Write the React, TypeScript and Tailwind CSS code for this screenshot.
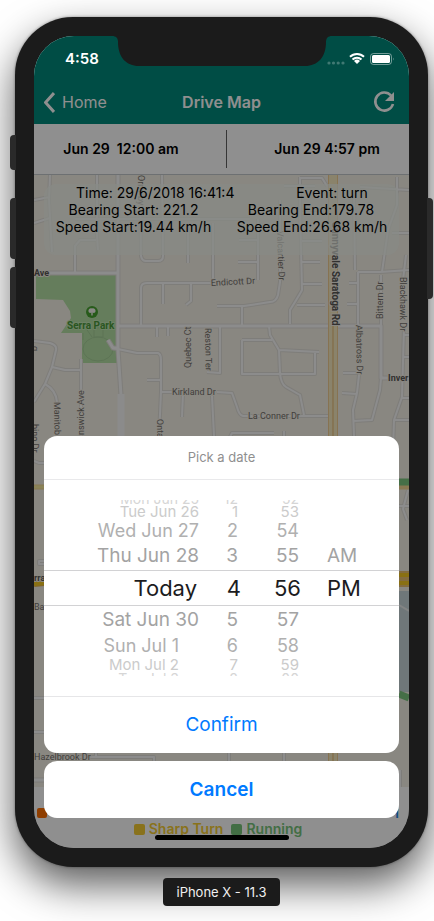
import React from "react";

type Label = { t: string; x: number; y: number; r?: number; bold?: boolean; size?: number };

const roads = [
  "M50 175L49 200L52 252M34 223L50 218M34 200L50 197",
  "M97 175V236L98 250M75 272V246L80 240H96",
  "M140 175L141 256Q142 261 146 261H158Q163 261 163 256L162 175",
  "M188 228V263M75 219H250M213 223V283",
  "M141 325V288Q141 283 147 283H212M163 283V304M191 283V301L186 305",
  "M34 341L50 343Q57 345 56 350L52 367L45 384L34 402M52 367L65 370H82M81 359V436M45 384Q56 390 57 402",
  "M113 348L137 353H158Q161 354 161 360V392L159 436M147 380H160M161 392H172",
  "M183 392L182 417M212 396L214 436M157 326V337M168 326V336M207 372L220 373V326",
  "M300 177V205L302 290Q300 294 290 310V324M300 178H322L327 186M284 186H315",
  "M302 213H317M302 241H322M302 262H320M302 284H322M239 240H257M238 262H257M258 219V280",
  "M280 200V282L278 295Q276 302 270 302L244 306H217M242 306V326M297 305H325",
  "M354 190L355 270M358 272H380L409 270M358 272V326M349 283H357M347 304H357",
  "M397 177V205L388 230L382 272M360 187L409 190M392 233H409M406 255L403 280M381 275V326",
  "M242 340H272M242 340V374H315V352M279 350L319 352M269 326L270 335L279 350L280 373Q281 384 286 387L300 395L304 415",
  "M217 392L232 393L237 407Q239 415 243 416H329M230 437L232 433H274M284 431V436",
  "M343 373H358M342 393L357 394M359 375L357 393L353 410L354 436M353 421L372 420L380 390L381 378",
  "M404 327L402 397L394 420L393 450M404 335H409M404 357H409M402 398H409M395 420H409",
  "M34 461L39 463H44M44 561H39V564H44M34 698H44M34 732H44M399 506H409M408 490L403 509L407 520",
  "M80 757H154V787M96 750V757M229 750V762M284 750V762M400 770V787",
];

const mainRoads = ["M34 273H117", "M117 326H381V378H409", "M118 175V350L121 395V436", "M108 340L113 348H118", "M34 780H44"];

const labels: Label[] = [
  { t: "Orm", x: 138, y: 175, r: 90 },
  { t: "by", x: 138, y: 196, r: 90 },
  { t: "Ave", x: 34, y: 276, bold: true },
  { t: "Endicott Dr", x: 211, y: 286, r: -3 },
  { t: "Valcartier Dr", x: 277, y: 231, r: 88 },
  { t: "Sunnyvale Saratoga Rd", x: 332, y: 222, r: 90, bold: true, size: 10 },
  { t: "Bittern Dr", x: 383, y: 319, r: -90 },
  { t: "Blackhawk Dr", x: 400, y: 277, r: 90 },
  { t: "Albatross Dr", x: 356, y: 325, r: 89 },
  { t: "Quebec Ct", x: 191, y: 368, r: -90 },
  { t: "Reston Ter", x: 205, y: 328, r: 89 },
  { t: "Kirkland Dr", x: 172, y: 395 },
  { t: "La Conner Dr", x: 248, y: 419 },
  { t: "Inver", x: 388, y: 381, bold: true },
  { t: "Manitob", x: 54, y: 402, r: 89 },
  { t: "nswick Ave", x: 84, y: 435, r: -90 },
  { t: "Onta", x: 157, y: 419, r: 89 },
  { t: "g", x: 32, y: 346, r: 90 },
  { t: "bino Dr", x: 32, y: 424, r: 90 },
  { t: "rra", x: 34, y: 581, bold: true },
  { t: "Bar", x: 34, y: 610 },
  { t: "Hazelbrook Dr", x: 34, y: 760 },
];

function MapView() {
  return (
    <svg viewBox="34 175 375 612" preserveAspectRatio="xMidYMin slice" className="block h-[612px] w-full" role="img" aria-label="Map">
      <rect x="34" y="175" width="375" height="612" fill="#f4f0e6" />
      <path d="M36 275H117V363H82V333H61L71 318L70 311L63 300L36 299Z" fill="#b5dfa4" />
      <g fill="none" stroke="#a5cf98" strokeWidth="1">
        <ellipse cx="98" cy="349" rx="15" ry="12" />
        <path d="M83 333V340M94 328H103V337H94ZM85 327L92 337" />
      </g>
      <g fill="none" strokeLinejoin="round">
        <g stroke="#e1dfd9" strokeWidth="4">{roads.map((d) => <path key={d} d={d} />)}</g>
        <g stroke="#e1dfd9" strokeWidth="5">{mainRoads.map((d) => <path key={d} d={d} />)}</g>
        <g stroke="#fafafa" strokeWidth="2">{roads.map((d) => <path key={d} d={d} />)}</g>
        <g stroke="#fafafa" strokeWidth="3">{mainRoads.map((d) => <path key={d} d={d} />)}</g>
        <path d="M121 394V436" stroke="#f8f8f8" strokeWidth="7" />
        <path d="M333 175V787" stroke="#f0cd92" strokeWidth="10" />
        <path d="M333 175V787" stroke="#f6eabf" strokeWidth="8" />
        <path d="M333 326V787" stroke="#e6b56f" strokeWidth="1" />
        <path d="M34 487H44M399 487H409" stroke="#f2d692" strokeWidth="5" />
        <path d="M34 487H44" stroke="#f7ea9d" strokeWidth="3" />
        <path d="M34 584L44 583M399 579H409" stroke="#e6b44c" strokeWidth="6" />
        <path d="M399 579H409" stroke="#e9c071" strokeWidth="16" />
        <path d="M34 584L44 583M399 575H409M399 583H409" stroke="#f5c823" strokeWidth="4" />
        <path d="M399 482H409" stroke="#7cc77f" strokeWidth="7" />
      </g>
      <path d="M399 591H409V692H399Z" fill="#c6d4d8" />
      <path d="M399 605L409 611" stroke="#e8eaea" strokeWidth="2" />
      <path d="M399 694L409 698" stroke="#7cc77f" strokeWidth="7" />
      <g fontFamily='Roboto, "Noto Sans", sans-serif' fontSize="9" stroke="#f4f0e6" strokeWidth="2" strokeLinejoin="round" paintOrder="stroke">
        {labels.map((l) => (
          <text key={l.t} x={l.x} y={l.y} fontSize={l.size} fontWeight={l.bold ? 700 : 400} fill={l.bold ? "#5a5855" : "#74716d"} transform={l.r ? `rotate(${l.r} ${l.x} ${l.y})` : undefined}>
            {l.t}
          </text>
        ))}
        <text x="67" y="329" fontSize="10" fontWeight="700" fill="#4c9a3c" stroke="#c4e8b6">Serra Park</text>
      </g>
      <circle cx="92" cy="312" r="6" fill="#46a22f" />
      <path d="M92 308.400C94 307.500 96 309.500 95.500 311.300C95.500 313 93.500 313.200 92.700 312.600V315.500H91.300V312.600C90.500 313.200 88.500 313 88.500 311.300C88 309.500 90 307.500 92 308.400Z" fill="#f4f4ee" />
    </svg>
  );
}

type WheelRow = { date: string; hour: string; minute: string; half?: string; row: string; pad?: string };

const wheel: WheelRow[] = [
  { date: "Mon Jun 25", hour: "12", minute: "52", row: "h-1 items-end text-[14px] leading-[11px] text-[#d6d6d6]" },
  { date: "Tue Jun 26", hour: "1", minute: "53", row: "h-[15px] items-center text-[15px] leading-4 text-[#cbcbcb]" },
  { date: "Wed Jun 27", hour: "2", minute: "54", row: "h-[23px] items-center text-[18px] leading-6 text-[#b0b0b0]" },
  { date: "Thu Jun 28", hour: "3", minute: "55", half: "AM", row: "h-7 items-center text-[19px] leading-7 text-[#a3a3a3]" },
  { date: "Today", hour: "4", minute: "56", half: "PM", row: "h-9 items-center border-y border-[#d2d2d4] text-[22px] leading-8 text-[#1c1c1e]", pad: "pr-[2px]" },
  { date: "Sat Jun 30", hour: "5", minute: "57", row: "h-7 items-center text-[19px] leading-7 text-[#a3a3a3]" },
  { date: "Sun Jul 1", hour: "6", minute: "58", row: "h-[23px] items-center text-[18px] leading-6 text-[#b0b0b0]", pad: "pr-[20px]" },
  { date: "Mon Jul 2", hour: "7", minute: "59", row: "h-[15px] items-center text-[15px] leading-4 text-[#cbcbcb]", pad: "pr-[20px]" },
  { date: "Tue Jul 3", hour: "8", minute: "00", row: "h-1 items-start text-[14px] leading-[14px] text-[#d6d6d6]", pad: "pr-[20px]" },
];

function Wheel() {
  return (
    <div role="group" aria-label="Date and time" className="py-5">
      {wheel.map((r) => (
        <div key={r.date} className={"flex overflow-hidden whitespace-nowrap " + r.row}>
          <span className={"w-[155px] text-right " + (r.pad ?? "")}>{r.date}</span>
          <span className={r.date === "Today" ? "w-[42px] text-right" : "w-[42px] pr-[3px] text-right"}>{r.hour}</span>
          <span className={r.date === "Today" ? "w-[60px] text-right" : "w-[60px] pr-[2px] text-right"}>{r.minute}</span>
          <span className="ml-[26px]">{r.half}</span>
        </div>
      ))}
    </div>
  );
}

function StatusBar() {
  return (
    <div className="absolute inset-x-0 top-0 flex h-11 justify-between pr-[14px] pl-[31px] text-white">
      <span className="pt-[11px] text-[15px] leading-6 font-semibold">4:58</span>
      <svg width="70" height="44" viewBox="0 0 70 44" aria-label="Wi-Fi and battery">
        <g fill="#fff" fillOpacity="0.250">
          <circle cx="4" cy="27" r="1.600" /><circle cx="8.500" cy="27" r="1.600" /><circle cx="13.200" cy="27" r="1.600" /><circle cx="18" cy="27" r="1.600" />
        </g>
        <path d="M32 28L29 25A4.300 4.300 0 0 1 35 25Z" fill="#fff" />
        <g fill="none" stroke="#fff" strokeWidth="2"><path d="M27.500 23.500A6.500 6.500 0 0 1 36.500 23.500M25 20.800A10 10 0 0 1 39 20.800" /></g>
        <rect x="45.500" y="17.500" width="21" height="11" rx="3" fill="none" stroke="#fff" strokeOpacity="0.450" />
        <rect x="47" y="19" width="18" height="8" rx="1.500" fill="#fff" />
        <path d="M68 21.500Q69.500 23 68 24.500Z" fill="#fff" fillOpacity="0.450" />
      </svg>
    </div>
  );
}

function Notch() {
  return (
    <svg viewBox="0 0 220 31" className="absolute -top-px left-1/2 w-[220px] -translate-x-1/2" aria-hidden="true">
      <path d="M0 0H220V1C216 1 214 3 214 7C214 22 206 31 193 31H27C14 31 6 22 6 7C6 3 4 1 0 1Z" fill="#1b1b1b" />
    </svg>
  );
}

export default function App() {
  return (
    <div className="overflow-hidden bg-white pt-[17px] pr-[6px] pb-4 pl-[15px] font-[Inter,'Liberation_Sans',sans-serif]">
      <div className="relative rounded-[58px] bg-[#1b1b1b] p-[19px] shadow-[0_18px_40px_rgba(0,0,0,0.65),0_0_3px_rgba(0,0,0,0.4)]">
        <span className="absolute top-[118px] -left-[5px] h-[35px] w-[6px] rounded-l-sm bg-[#2a2a2a]" />
        <span className="absolute top-[181px] -left-[5px] h-[61px] w-[6px] rounded-l-sm bg-[#2a2a2a]" />
        <span className="absolute top-[250px] -left-[5px] h-[61px] w-[6px] rounded-l-sm bg-[#2a2a2a]" />
        <span className="absolute top-[181px] -right-[5px] h-[101px] w-[6px] rounded-r-sm bg-[#2a2a2a]" />

        <main className="relative overflow-hidden rounded-[40px] bg-white">
          <header className="flex h-[88px] items-end bg-[#00897b] text-white">
            <div className="grid h-11 w-full grid-cols-3 items-center px-[10px]">
              <button type="button" className="flex items-center gap-[7px] text-[16px] leading-6">
                <svg width="11" height="21" viewBox="0 0 11 21" fill="none" stroke="currentColor" strokeWidth="3" aria-hidden="true"><path d="M10 1L1.500 10.500L10 20" /></svg>
                Home
              </button>
              <h1 className="text-center text-[16px] leading-6 font-semibold">Drive Map</h1>
              <button type="button" aria-label="Refresh" className="mr-[3px] justify-self-end">
                <svg width="24" height="24" viewBox="0 0 24 24" fill="none" aria-hidden="true">
                  <path d="M19 5.500A9 9 0 1 0 21 14" stroke="currentColor" strokeWidth="2.600" />
                  <path d="M22 2V11H13Z" fill="currentColor" />
                </svg>
              </button>
            </div>
          </header>

          <div className="grid h-[51px] grid-cols-[192px_1px_1fr] items-center border-b border-[#c3c8cc] text-center text-[14px] leading-5 font-semibold text-black">
            <button type="button" className="pr-[18px] whitespace-pre">Jun 29  12:00 am</button>
            <span className="h-[38px] bg-[#606060]" />
            <button type="button" className="pl-[18px]">Jun 29 4:57 pm</button>
          </div>

          <section className="relative">
            <MapView />
            <div className="absolute inset-x-[10px] top-[9px] h-[71px] rounded-xl bg-[#f2f6ee]/70 text-[14px] leading-[17px] whitespace-nowrap text-black">
              <div className="grid grid-cols-[187px_1fr] text-center">
                <span className="pl-[32px]">Time: 29/6/2018 16:41:4</span><span className="pl-[34px]">Event: turn</span>
                <span className="pr-[8px]">Bearing Start: 221.2</span><span className="pr-[8px]">Bearing End:179.78</span>
                <span className="pr-[8px]">Speed Start:19.44 km/h</span><span className="pr-[6px]">Speed End:26.68 km/h</span>
              </div>
            </div>
          </section>

          <footer className="h-[61px] pt-4 text-[14px] leading-5 font-semibold">
            <div className="flex h-5 items-center justify-between pr-[10px] pl-[3px]">
              <span className="size-[10px] rounded-xs bg-[#ff6f00]" />
              <span className="text-[#1e88e5]">l</span>
            </div>
            <div className="-mt-1 flex items-center justify-center gap-2 pr-[7px]">
              <span className="flex items-center gap-1 text-[#f5cc33]"><i className="size-[11px] rounded-xs bg-current" />Sharp Turn</span>
              <span className="flex items-center gap-1 text-[#76c47a]"><i className="size-[11px] rounded-xs bg-current" />Running</span>
            </div>
          </footer>

          <div className="absolute inset-0 bg-black/44" />
          <Notch />
          <StatusBar />
          <div role="dialog" aria-label="Pick a date" className="absolute inset-x-[10px] bottom-[30px] flex flex-col gap-2 text-center">
            <div className="overflow-hidden rounded-[13px] bg-white">
              <h2 className="border-b border-[#e9e9eb] text-[13px] leading-[43px] font-normal text-[#8f8f8f]">Pick a date</h2>
              <Wheel />
              <button type="button" className="block h-[57px] w-full border-t border-[#e6e6e8] text-[19px] leading-[56px] text-[#007aff]">Confirm</button>
            </div>
            <button type="button" className="h-[57px] rounded-[13px] bg-white pt-[2px] text-[19px] font-semibold text-[#007aff]">Cancel</button>
          </div>
          <span className="absolute bottom-2 left-1/2 h-[5px] w-[134px] -translate-x-1/2 rounded-full bg-black" />
        </main>
      </div>
      <div className="relative mt-[11px] flex justify-center">
        <p className="rounded-sm bg-[#1b1b1b] px-[13px] text-[13px] leading-7 text-[#f0f0f0]">iPhone X - 11.3</p>
      </div>
    </div>
  );
}
